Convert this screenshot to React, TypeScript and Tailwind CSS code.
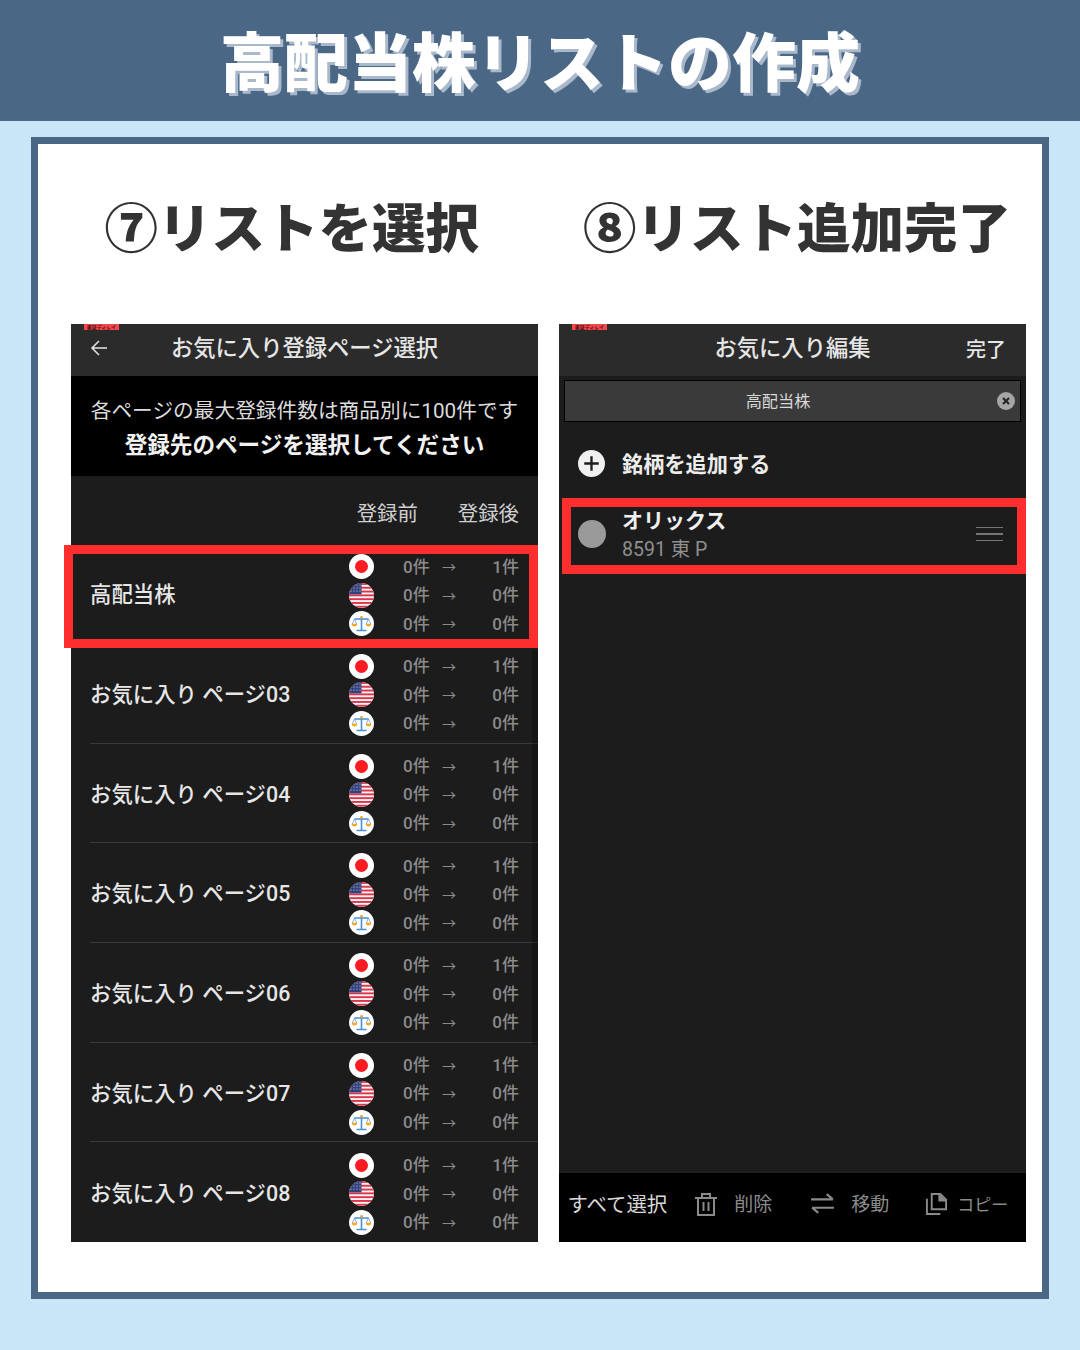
import React from "react";

const Jp = () => (
  <svg viewBox="0 0 25 25" className="w-[25px] h-[25px] block">
    <circle cx="12.5" cy="12.5" r="12.5" fill="#fff" />
    <circle cx="12.5" cy="12.5" r="6.5" fill="#fb1c23" />
  </svg>
);
const Us = () => {
  const id = React.useId();
  return (
    <svg viewBox="0 0 25 25" className="w-[25px] h-[25px] block">
      <defs>
        <clipPath id={id}><circle cx="12.5" cy="12.5" r="12.5" /></clipPath>
      </defs>
      <g clipPath={`url(#${id})`}>
        <rect width="25" height="25" fill="#f4f4f4" />
        {[0, 3.8, 7.6, 11.4, 15.2, 19, 22.8].map((y) => (
          <rect key={y} x="0" y={y} width="25" height="1.9" fill="#e0344a" />
        ))}
        <rect width="12.5" height="11.4" fill="#33427c" />
        {[2, 5, 8].map((y) =>
          [2, 5, 8, 11].map((x) => <circle key={`${x}-${y}`} cx={x} cy={y} r="0.6" fill="#dfe3f0" />)
        )}
      </g>
    </svg>
  );
};
const Scale = () => (
  <svg viewBox="0 0 25 25" className="w-[25px] h-[25px] block">
    <circle cx="12.5" cy="12.5" r="12.5" fill="#fff" />
    <path d="M12.5 6v13M7.5 19.5h10M5.5 8h14" stroke="#4a90d9" strokeWidth="1.6" fill="none" />
    <path d="M5.5 8l-2.2 5M5.5 8l2.2 5M19.5 8l-2.2 5M19.5 8l2.2 5" stroke="#4a90d9" strokeWidth="0.7" fill="none" />
    <path d="M2.8 12.8h5.4a2.7 2.7 0 0 1-5.4 0zM16.8 12.8h5.4a2.7 2.7 0 0 1-5.4 0z" fill="#f5a623" />
    <circle cx="12.5" cy="6.4" r="1.4" fill="#f5a623" />
  </svg>
);

const Badge = () => (
  <div className="absolute z-10 left-[13px] top-0 w-[35px] h-[6px] bg-[#f4474c] text-[5px] leading-[6px] text-[#3a1010] text-center whitespace-nowrap font-bold">
    東証ディレイ
  </div>
);

const Stat = ({ icon, after }: { icon: React.ReactNode; after: string }) => (
  <div className="flex items-center h-[28.5px]">
    <div className="w-[25px] mr-[29px] shrink-0 mt-[3px]">{icon}</div>
    <span className="w-[26px] mt-[4px] text-[17px] font-medium text-[#8b8b8b] whitespace-nowrap">0件</span>
    <span className="w-[13px] ml-[13px] mt-[4px] text-[14px] text-[#8b8b8b] leading-none">→</span>
    <span className="w-[64px] mt-[4px] text-right text-[17px] font-medium text-[#8b8b8b] whitespace-nowrap">{after}</span>
  </div>
);

const Row = ({ name, line }: { name: string; line: boolean }) => (
  <div className={`h-[99.67px] ml-[19px] flex items-center justify-between pr-[19px] ${line ? "border-b border-b-[#3a3a3a]" : ""}`}>
    <span className="text-[21.4px] mt-[3px] font-medium text-[#e6e6e6] whitespace-nowrap">{name}</span>
    <div className="flex flex-col">
      <Stat icon={<Jp />} after="1件" />
      <Stat icon={<Us />} after="0件" />
      <Stat icon={<Scale />} after="0件" />
    </div>
  </div>
);

const Heading = ({ text, cls }: { text: string; cls: string }) => (
  <div className={`h-[180px] flex items-center pb-[18px] ${cls}`}>
    <h2 className="text-[53.5px] leading-none font-black text-[#333333] whitespace-nowrap">{text}</h2>
  </div>
);

export default function App() {
  const pages = ["高配当株", "お気に入り ページ03", "お気に入り ページ04", "お気に入り ページ05", "お気に入り ページ06", "お気に入り ページ07", "お気に入り ページ08"];
  return (
    <div className="w-[1080px] h-[1350px] bg-[#c9e5f8] overflow-hidden font-['Roboto','Noto_Sans_CJK_JP','Noto_Sans',sans-serif]">
      <header className="h-[121px] bg-[#4a6785] flex items-center justify-center pb-[5px]">
        <h1 className="text-[64px] leading-none font-black font-['Noto_Sans_CJK_JP',sans-serif] text-white [text-shadow:3px_3px_0_#a9b8ca] whitespace-nowrap">高配当株リストの作成</h1>
      </header>
      <div className="px-[31px] pt-[16px]">
        <div className="h-[1162px] border-[7px] border-[#4a6785] bg-white pl-[33px] pr-[16px] grid grid-cols-[467px_467px] gap-x-[21px] font-['Noto_Sans_CJK_JP',sans-serif]">
          <section>
            <Heading text="⑦リストを選択" cls="pl-[33.5px]" />
            <div className="relative h-[918px] bg-[#1c1c1c] font-['Roboto','Noto_Sans_CJK_JP',sans-serif]">
              <Badge />
              <div className="h-[52px] bg-[#2b2b2b] flex items-center justify-center relative pb-[2px]">
                <svg viewBox="0 0 18 18" className="absolute left-[19px] top-[15px] w-[18px] h-[18px]" fill="none" stroke="#e6e6e6" strokeWidth="1.5">
                  <path d="M17 9H2M9 2L2 9l7 7" />
                </svg>
                <span className="text-[22.3px] font-medium text-[#e6e6e6] whitespace-nowrap">お気に入り登録ページ選択</span>
              </div>
              <div className="h-[100px] bg-black flex flex-col items-center justify-center pt-[5px]">
                <p className="text-[20.7px] leading-[34px] -mt-[1px] text-[#dcdcdc] whitespace-nowrap">各ページの最大登録件数は商品別に100件です</p>
                <p className="text-[22.6px] leading-[34px] mt-[1px] font-bold text-[#f2f2f2] whitespace-nowrap">登録先のページを選択してください</p>
              </div>
              <div className="h-[68.5px] flex items-center justify-end gap-[40px] pr-[19px] pt-[9px] text-[20.4px] text-[#cfcfcf]">
                <span>登録前</span>
                <span>登録後</span>
              </div>
              <div>
                {pages.map((p, i) => (
                  <Row key={p} name={p} line={i < pages.length - 1} />
                ))}
              </div>
              <div className="absolute left-[461px] top-[326px] w-[6px] h-[395px] bg-black/25" />
              <div className="absolute -left-[7px] top-[221px] w-[474px] h-[103px] border-[9px] border-[#ff2e2e]" />
            </div>
          </section>
          <section>
            <Heading text="⑧リスト追加完了" cls="pl-[24px]" />
            <div className="relative h-[918px] bg-[#1c1c1c] flex flex-col font-['Roboto','Noto_Sans_CJK_JP',sans-serif]">
              <Badge />
              <div className="h-[52px] shrink-0 bg-[#2b2b2b] flex items-center justify-center relative pb-[2px]">
                <span className="text-[22.3px] font-medium text-[#e6e6e6] whitespace-nowrap">お気に入り編集</span>
                <span className="absolute right-[20px] top-[11px] text-[20px] font-medium text-[#e6e6e6]">完了</span>
              </div>
              <div className="mx-[5px] mt-[4px] h-[42px] shrink-0 bg-[#3a3a3a] border border-black flex items-center justify-center relative">
                <span className="text-[16.2px] mt-[2px] text-[#d8d8d8] -ml-[29px]">高配当株</span>
                <svg viewBox="0 0 18 18" className="absolute right-[5px] top-[11px] w-[18px] h-[18px]">
                  <circle cx="9" cy="9" r="9" fill="#a5a5a5" />
                  <path d="M6 6l6 6M12 6l-6 6" stroke="#222" strokeWidth="2" />
                </svg>
              </div>
              <div className="flex items-center h-[82px] shrink-0 pl-[19px]">
                <svg viewBox="0 0 28 28" className="w-[27px] h-[27px] shrink-0">
                  <circle cx="14" cy="14" r="14" fill="#f0f0f0" />
                  <path d="M14 6.5v15M6.5 14h15" stroke="#1c1c1c" strokeWidth="2.4" />
                </svg>
                <span className="ml-[17px] mt-[4px] text-[21.2px] font-bold text-[#ececec] whitespace-nowrap">銘柄を追加する</span>
              </div>
              <div className="flex items-center h-[60px] shrink-0 pl-[19px] pr-[23px]">
                <div className="w-[28px] h-[28px] rounded-full bg-[#9a9a9a] shrink-0" />
                <div className="ml-[16px] flex flex-col flex-1 mt-[2px]">
                  <span className="text-[21px] leading-[28px] font-bold text-[#f0f0f0]">オリックス</span>
                  <span className="text-[19.5px] leading-[28px] mt-[1px] text-[#8f8f8f]">8591 東 P</span>
                </div>
                <div className="w-[27px] flex flex-col gap-[5px]">
                  <div className="h-[1.5px] bg-[#767676]" />
                  <div className="h-[1.5px] bg-[#767676]" />
                  <div className="h-[1.5px] bg-[#767676]" />
                </div>
              </div>
              <div className="flex-1" />
              <div className="h-[69px] shrink-0 bg-black flex items-center pl-[8.5px] pb-[8px] whitespace-nowrap">
                <span className="text-[20.4px] mt-[4px] text-[#d8d8d8]">すべて選択</span>
                <svg viewBox="0 0 24 24" className="ml-[27px] w-[24px] h-[24px]" fill="none" stroke="#8a8a8a" strokeWidth="2">
                  <path d="M1 6h22M8 6V2h8v4M4 6v17h16V6M9.5 10v9M14.5 10v9" />
                </svg>
                <span className="ml-[16px] mt-[4px] text-[19px] text-[#8a8a8a]">削除</span>
                <svg viewBox="0 0 24 24" className="ml-[38px] w-[25px] h-[25px]" fill="none" stroke="#8a8a8a" strokeWidth="2">
                  <path d="M1 8h21M16 3l6 5M23 16H2M8 21l-6-5" />
                </svg>
                <span className="ml-[16px] mt-[4px] text-[19px] text-[#8a8a8a]">移動</span>
                <svg viewBox="0 0 24 24" className="ml-[36px] w-[23px] h-[23px]" fill="none" stroke="#8a8a8a" strokeWidth="2">
                  <path d="M2 7v16h14" />
                  <path d="M7 2h9l6 6v10H7z" />
                  <path d="M15 2v7h7" fill="#8a8a8a" />
                </svg>
                <span className="ml-[9px] mt-[4px] text-[17px] text-[#8a8a8a]">コピー</span>
              </div>
              <div className="absolute left-[3px] top-[174px] w-[464px] h-[76px] border-[9.5px] border-[#ff2e2e]" />
            </div>
          </section>
        </div>
      </div>
    </div>
  );
}
